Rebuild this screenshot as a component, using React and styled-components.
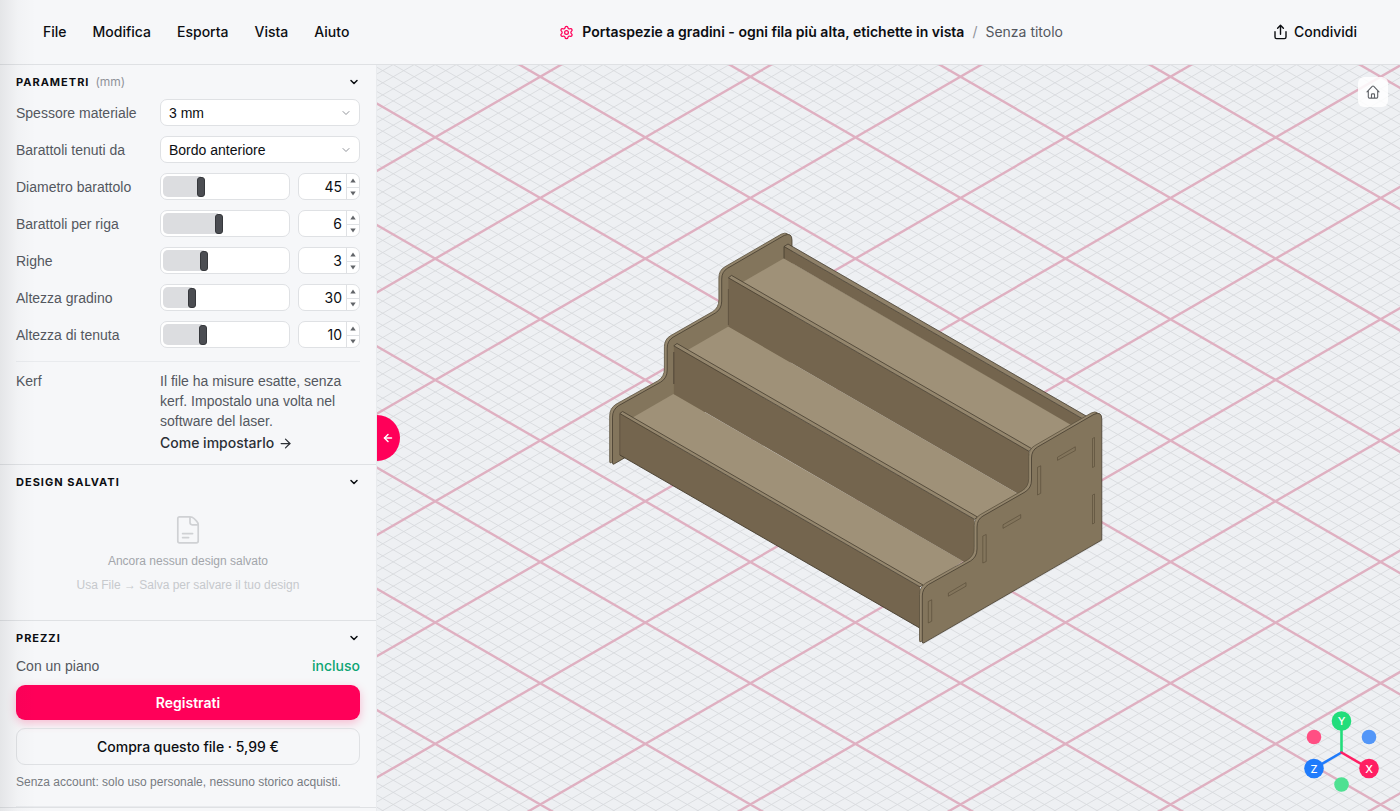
import React, { useState } from 'react';
import styled, { createGlobalStyle } from 'styled-components';
import { ArrowLeft, ArrowRight, ChevronDown, Settings } from 'lucide-react';

const GlobalStyle = createGlobalStyle`
  :root {
    --surface: #f6f7f9;
    --canvas: #eef0f3;
    --line: #dfe1e4;
    --line-soft: #e9ebee;
    --text: #0c0e12;
    --text-secondary: #54585f;
    --text-muted: #909399;
    --accent: #ff0059;
    --success: #0da574;
    --font-plain: 'Liberation Sans', Arial, sans-serif;
  }

  * {
    box-sizing: border-box;
  }

  body {
    margin: 0;
    background: var(--surface);
    color: var(--text);
    font-family: Inter, 'Liberation Sans', sans-serif;
    font-size: 14px;
    line-height: 20px;
  }

  button,
  input,
  select {
    font: inherit;
    color: inherit;
  }
`;

const Page = styled.div`
  display: flex;
  flex-direction: column;
  height: 100vh;
  overflow: hidden;
`;

const EdgeShade = styled.div`
  position: absolute;
  top: 0;
  bottom: 0;
  left: 0;
  width: 36px;
  background: linear-gradient(to right, rgba(20, 24, 32, 0.08), rgba(20, 24, 32, 0.02) 50%, transparent);
  pointer-events: none;
`;

const Header = styled.header`
  display: flex;
  align-items: center;
  justify-content: space-between;
  flex: none;
  height: 65px;
  padding: 0 32px;
  border-bottom: 1px solid var(--line);
`;

const Menu = styled.nav`
  display: flex;
  gap: 4px;
`;

const MenuButton = styled.button`
  display: flex;
  align-items: center;
  gap: 6px;
  padding: 6px 11px;
  border: 0;
  background: none;
  font-weight: 500;
  cursor: pointer;
`;

const DocumentTitle = styled.div`
  display: flex;
  align-items: center;
  gap: 8px;
  white-space: nowrap;

  svg {
    color: var(--accent);
  }
`;

const DesignName = styled.h1`
  margin: 0;
  font-size: 14px;
  font-weight: 600;
`;

const Slash = styled.span`
  color: var(--text-muted);
`;

const FileName = styled.span`
  color: var(--text-secondary);
`;

const Body = styled.div`
  display: flex;
  flex: 1;
  min-height: 0;
`;

const Sidebar = styled.aside`
  flex: none;
  width: 377px;
  border-right: 1px solid var(--line-soft);
  overflow: hidden;
`;

const Section = styled.section`
  padding: 0 16px ${({ $bottom }) => $bottom || 0}px;
  border-bottom: 1px solid var(--line);
`;

const SectionHeader = styled.button`
  display: flex;
  align-items: center;
  width: 100%;
  height: 34px;
  padding: 0;
  border: 0;
  background: none;
  font-size: 12px;
  text-align: left;
  cursor: pointer;

  svg {
    margin-left: auto;
  }
`;

const SectionTitle = styled.span`
  font-size: 11px;
  font-weight: 700;
  letter-spacing: 1px;
  text-transform: uppercase;
`;

const Unit = styled.span`
  margin-left: 6px;
  color: var(--text-muted);
`;

const Rows = styled.div`
  display: flex;
  flex-direction: column;
  gap: 10px;
`;

const Row = styled.div`
  display: grid;
  grid-template-columns: 136px 1fr;
  column-gap: 8px;
  align-items: ${({ $top }) => ($top ? 'start' : 'center')};
`;

const Label = styled.label`
  color: var(--text-secondary);
  font-family: var(--font-plain);
  white-space: nowrap;
`;

const SelectBox = styled.div`
  display: grid;
  align-items: center;

  svg {
    grid-area: 1 / 1;
    justify-self: end;
    margin-right: 8px;
    color: var(--text-muted);
    pointer-events: none;
  }
`;

const Select = styled.select`
  grid-area: 1 / 1;
  width: 100%;
  height: 27px;
  padding: 0 8px;
  border: 1px solid var(--line);
  border-radius: 7px;
  background: #fff;
  font-family: var(--font-plain);
  appearance: none;
`;

const Controls = styled.div`
  display: grid;
  grid-template-columns: 1fr 62px;
  gap: 8px;
`;

const SliderBox = styled.div`
  display: grid;
  align-items: center;
  height: 27px;
  padding: 2px 2px 2px 0;
  border: 1px solid var(--line);
  border-radius: 7px;
  background: #fff;
`;

const SliderFill = styled.span`
  grid-area: 1 / 1;
  height: 21px;
  margin-left: 2px;
  border-radius: 5px 0 0 5px;
  background: #dcdde0;
`;

const Slider = styled.input`
  grid-area: 1 / 1;
  width: 100%;
  height: 21px;
  margin: 0;
  background: none;
  appearance: none;

  &::-webkit-slider-thumb {
    width: 8px;
    height: 20px;
    border: 1px solid #36383c;
    border-radius: 3px;
    background: #4b4d52;
    appearance: none;
  }
`;

const NumberBox = styled.div`
  display: grid;
  grid-template-columns: 1fr 13px;
  height: 27px;
  border: 1px solid var(--line);
  border-radius: 7px;
  background: #fff;
  overflow: hidden;
`;

const NumberInput = styled.input`
  min-width: 0;
  padding: 0 4px 0 0;
  border: 0;
  background: none;
  text-align: right;
  appearance: textfield;

  &::-webkit-inner-spin-button {
    appearance: none;
  }
`;

const Stepper = styled.div`
  display: grid;
  grid-template-rows: 1fr 1fr;
  border-left: 1px solid var(--line);
`;

const StepButton = styled.button`
  display: flex;
  align-items: center;
  justify-content: center;
  padding: 0;
  border: 0;
  background: none;

  & + & {
    border-top: 1px solid var(--line);
  }
`;

const Divider = styled.hr`
  width: 100%;
  margin: ${({ $space }) => $space}px 0 0;
  border: 0;
  border-top: 1px solid var(--line-soft);
`;

const KerfRow = styled(Row)`
  padding-top: 9px;
`;

const KerfText = styled.p`
  margin: 0 0 2px;
  color: var(--text-secondary);
  font-family: var(--font-plain);
`;

const KerfLink = styled.a`
  display: inline-flex;
  align-items: center;
  gap: 4px;
  color: #2c3036;
  font-weight: 500;
  text-decoration: none;
`;

const EmptyState = styled.div`
  display: flex;
  flex-direction: column;
  align-items: center;
  padding: 16px 0 25px;
  color: #a3a6ab;
  font-family: var(--font-plain);
  font-size: 12px;

  svg {
    margin-bottom: 6px;
    color: #cfd1d4;
  }
`;

const EmptyHint = styled.span`
  margin-top: 4px;
  color: #c6c9cd;
`;

const PlanRow = styled.div`
  display: flex;
  justify-content: space-between;
  padding: 1px 0 9px;
  color: var(--text-secondary);
`;

const Plan = styled.span`
  font-family: var(--font-plain);
`;

const Included = styled.span`
  color: var(--success);
  font-weight: 500;
`;

const ActionButton = styled.button`
  display: block;
  width: 100%;
  height: ${({ $primary }) => ($primary ? 35 : 37)}px;
  margin-bottom: 8px;
  border: ${({ $primary }) => ($primary ? '0' : '1px solid var(--line)')};
  border-radius: 9px;
  background: ${({ $primary }) => ($primary ? 'var(--accent)' : 'transparent')};
  box-shadow: ${({ $primary }) => ($primary ? '0 3px 10px rgba(255, 0, 89, 0.25)' : 'none')};
  color: ${({ $primary }) => ($primary ? '#fff' : 'var(--text)')};
  font-weight: ${({ $primary }) => ($primary ? 600 : 500)};
  cursor: pointer;
`;

const Note = styled.p`
  margin: 0;
  color: #777b81;
  font-family: var(--font-plain);
  font-size: 12px;
  line-height: 18px;
  white-space: nowrap;
`;

const Viewport = styled.main`
  position: relative;
  flex: 1;
  min-width: 0;
  background: var(--canvas);
`;

const Scene = styled.svg`
  display: block;
  width: 100%;
  height: 100%;
`;

const CollapseButton = styled.button`
  position: absolute;
  top: 50%;
  left: 0;
  display: flex;
  align-items: center;
  justify-content: center;
  width: 23px;
  height: 46px;
  padding: 0 2px 0 0;
  border: 0;
  border-radius: 0 23px 23px 0;
  background: var(--accent);
  color: #fff;
  transform: translateY(-50%);
`;

const HomeButton = styled.button`
  position: absolute;
  top: 12px;
  right: 12px;
  display: flex;
  align-items: center;
  justify-content: center;
  width: 30px;
  height: 30px;
  padding: 0;
  border: 0;
  border-radius: 6px;
  background: rgba(255, 255, 255, 0.85);
  color: #5f6267;
`;

const Gizmo = styled.svg`
  position: absolute;
  right: 18px;
  bottom: 16px;
`;

const PARAMS = [
  { id: 'diameter', label: 'Diametro barattolo', value: 45, min: 25, max: 90 },
  { id: 'perRow', label: 'Barattoli per riga', value: 6, min: 1, max: 12 },
  { id: 'rows', label: 'Righe', value: 3, min: 1, max: 7 },
  { id: 'step', label: 'Altezza gradino', value: 30, min: 15, max: 80 },
  { id: 'hold', label: 'Altezza di tenuta', value: 10, min: 3, max: 25 },
];

// Isometric floor grid: two families of lines at +-30 degrees
const SLOPE = 0.5774;
const CELL = 12.13;
const ORIGIN = { x: 540.3, y: 76.7 };

const gridPath = (major) => {
  const x0 = -400;
  const x1 = 2200;
  let d = '';
  for (let k = -160; k <= 210; k++) {
    if ((k % 10 === 0) !== major) continue;
    [SLOPE, -SLOPE].forEach((s) => {
      const y = ORIGIN.y + k * CELL;
      d += `M${x0} ${(y + s * (x0 - ORIGIN.x)).toFixed(1)}L${x1} ${(y + s * (x1 - ORIGIN.x)).toFixed(1)}`;
    });
  }
  return d;
};

const MINOR_GRID = gridPath(false);
const MAJOR_GRID = gridPath(true);

const PANEL =
  'M922.3 642V596Q922.3 588.5 928.5 584.5L970.5 561Q977 557 977 549V527Q977 519.5 983 516L1025 492Q1031.5 488 1031.5 480V458Q1031.5 450.5 1037.5 447L1094 414.3Q1101.8 411 1101.8 419V540L924 642.8Q922.3 643.8 922.3 642Z';

const Side = ({ x, y }) => (
  <g transform={`translate(${x} ${y})`} strokeWidth="0.8" strokeLinejoin="round">
    <path d={PANEL} transform="translate(-2.8 -1.3)" fill="#94866d" stroke="#5b503e" />
    <path d={PANEL} fill="#83755c" stroke="#453c2e" />
  </g>
);

const SLOTS = [
  'M1037.5 467.3L1040.7 465.8V493.3L1037.5 495Z',
  'M982.8 536L986.2 534.5V561.5L982.8 563Z',
  'M928.3 601.5L931.7 599.8V621.2L928.3 623Z',
  'M1057.5 457.3L1075.3 446.8V450.5L1057.5 460.3Z',
  'M1003 524.8L1020.7 514.6V518.2L1003 528.3Z',
  'M948.4 593L966 582.6V586.2L948.4 596.2Z',
  'M1092.5 438.5L1094.5 437.5V466.5L1092.5 467.5Z',
  'M1092.5 495L1094.5 494V523L1092.5 524Z',
];

const Rack = () => (
  <g strokeLinejoin="round">
    <Side x={-309.8} y={-178.9} />
    <path d="M784 258.3L1073 425.2L1034 452L742 282.5Z" fill="#9f9178" />
    <path d="M784 246.5L1083 419L1071 425L784 258.5Z" fill="#74654e" />
    <path d="M784 246.5L788 244L1087 416.5L1083 419Z" fill="#8f8169" stroke="#453c2e" strokeWidth="0.8" />
    <path d="M784 246.5V258.5" stroke="#453c2e" strokeWidth="0.8" />

    <path d="M728.4 326.5L1018 493.7L978 520L686 351Z" fill="#9f9178" />
    <path d="M728.4 277.8L1029 451V500L728.4 326.5Z" fill="#74654e" />
    <path d="M728.4 277.8L731.5 275.4L1032 448.8L1029 451.3Z" fill="#94866d" stroke="#453c2e" strokeWidth="0.8" />
    <path d="M728.4 289V325" stroke="#5b4e3b" strokeWidth="0.8" />

    <path d="M673.4 394L963 561.2L924 587L631 418.5Z" fill="#9f9178" />
    <path d="M673.8 345.8L974.5 519.3V568L673.8 394Z" fill="#74654e" />
    <path d="M673.8 345.8L677 343.5L977.5 517L974.5 519.3Z" fill="#94866d" stroke="#453c2e" strokeWidth="0.8" />
    <path d="M673.8 352V384" stroke="#453c2e" strokeWidth="0.8" />

    <path d="M619.8 413.5L920 586.8V628.2L619.8 455Z" fill="#74654e" />
    <path d="M619.8 455L920 628.2" stroke="#453c2e" strokeWidth="0.9" />
    <path d="M619.8 413.5L622.6 411.5L923 585L920 586.8Z" fill="#94866d" stroke="#453c2e" strokeWidth="0.8" />
    <path d="M619.8 414V455" stroke="#5b4e3b" strokeWidth="0.8" />

    <Side x={0} y={0} />
    {SLOTS.map((d) => (
      <path key={d} d={d} fill="#83755c" stroke="#554936" strokeWidth="0.6" />
    ))}
  </g>
);

const ShareIcon = () => (
  <svg width="15" height="16" viewBox="0 0 15 16" fill="none" stroke="currentColor" strokeWidth="1.4" strokeLinecap="round" strokeLinejoin="round">
    <path d="M7.5 10.3V1.5M4.6 4.2L7.5 1.3L10.4 4.2M2 7.8V13Q2 14.6 3.6 14.6H11.4Q13 14.6 13 13V7.8" />
  </svg>
);

const HomeIcon = () => (
  <svg width="14" height="14" viewBox="0 0 14 14" fill="none" stroke="currentColor" strokeWidth="1.1" strokeLinecap="round" strokeLinejoin="round">
    <path d="M1 6.8L6.2 1.4Q7 0.7 7.8 1.4L13 6.8M2.3 5.6V12Q2.3 13.1 3.4 13.1H10.6Q11.7 13.1 11.7 12V5.6M5.5 13V9.6Q5.5 8.9 6.2 8.9H7.8Q8.5 8.9 8.5 9.6V13" />
  </svg>
);

const FileIcon = () => (
  <svg width="24" height="30" viewBox="0 0 24 30" fill="none" stroke="currentColor" strokeWidth="1.7" strokeLinecap="round" strokeLinejoin="round">
    <path d="M14 1.8H3.6Q1.8 1.8 1.8 3.6V26Q1.8 27.8 3.6 27.8H20.4Q22.2 27.8 22.2 26V10Q22.2 7.8 20.6 6.2L18 3.5Q16.3 1.8 14 1.8V7.6Q14 9.8 16.2 9.8H22M6.6 18.6H16.6M6.6 22.6H12.6" />
  </svg>
);

const Triangle = ({ down }) => (
  <svg width="6" height="5" viewBox="0 0 6 5" fill="#626569">
    <path d={down ? 'M0.3 0.5H5.7L3 4.5Z' : 'M0.3 4.5H5.7L3 0.5Z'} />
  </svg>
);

const ParamRow = ({ id, label, value: initial, min, max }) => {
  const [value, setValue] = useState(initial);
  const change = (next) => setValue(Math.min(max, Math.max(min, Number(next))));

  return (
    <Row>
      <Label htmlFor={id}>{label}</Label>
      <Controls>
        <SliderBox>
          <SliderFill style={{ width: `${((value - min) / (max - min)) * 94 + 1}%` }} />
          <Slider type="range" aria-label={label} min={min} max={max} value={value} onChange={(e) => change(e.target.value)} />
        </SliderBox>
        <NumberBox>
          <NumberInput id={id} type="number" min={min} max={max} value={value} onChange={(e) => change(e.target.value)} />
          <Stepper>
            <StepButton type="button" aria-label={`${label} +`} onClick={() => change(value + 1)}>
              <Triangle />
            </StepButton>
            <StepButton type="button" aria-label={`${label} -`} onClick={() => change(value - 1)}>
              <Triangle down />
            </StepButton>
          </Stepper>
        </NumberBox>
      </Controls>
    </Row>
  );
};

const SelectRow = ({ id, label, options }) => (
  <Row>
    <Label htmlFor={id}>{label}</Label>
    <SelectBox>
      <Select id={id}>
        {options.map((option) => (
          <option key={option}>{option}</option>
        ))}
      </Select>
      <ChevronDown size={12} />
    </SelectBox>
  </Row>
);

const Heading = ({ title, unit }) => (
  <SectionHeader type="button">
    <SectionTitle>{title}</SectionTitle>
    {unit && <Unit>{unit}</Unit>}
    <ChevronDown size={12} strokeWidth={3} />
  </SectionHeader>
);

const AxisGizmo = () => (
  <Gizmo width="82" height="84" viewBox="1300 711 82 84" fontFamily="Inter, sans-serif" fontSize="11" fontWeight="500" textAnchor="middle">
    <circle cx="1314" cy="737" r="7.3" fill="#ff4f83" />
    <circle cx="1369" cy="737" r="7.3" fill="#5296f8" />
    <circle cx="1341.5" cy="784.5" r="7.3" fill="#4ee192" />
    <g strokeWidth="2.6" strokeLinecap="round">
      <path d="M1341.5 752.5V722" stroke="#22dd7b" />
      <path d="M1341.5 752.5L1314 768.5" stroke="#1f7bfb" />
      <path d="M1341.5 752.5L1369 768.5" stroke="#ff1f63" />
    </g>
    <circle cx="1341.5" cy="721" r="9.8" fill="#22dd7b" />
    <circle cx="1314" cy="768.5" r="9.8" fill="#1f7bfb" />
    <circle cx="1369" cy="768.5" r="9.8" fill="#ff1f63" />
    <g fill="#fff">
      <text x="1341.5" y="725">Y</text>
      <text x="1314" y="772.5">Z</text>
      <text x="1369" y="772.5">X</text>
    </g>
  </Gizmo>
);

const App = () => (
  <Page>
    <GlobalStyle />
    <Header>
      <Menu>
        {['File', 'Modifica', 'Esporta', 'Vista', 'Aiuto'].map((item) => (
          <MenuButton key={item} type="button">
            {item}
          </MenuButton>
        ))}
      </Menu>
      <DocumentTitle>
        <Settings size={15} />
        <DesignName>Portaspezie a gradini - ogni fila più alta, etichette in vista</DesignName>
        <Slash>/</Slash>
        <FileName>Senza titolo</FileName>
      </DocumentTitle>
      <MenuButton type="button">
        <ShareIcon />
        Condividi
      </MenuButton>
    </Header>

    <Body>
      <Sidebar>
        <Section $bottom={11}>
          <Heading title="Parametri" unit="(mm)" />
          <Rows>
            <SelectRow id="thickness" label="Spessore materiale" options={['3 mm', '4 mm', '6 mm']} />
            <SelectRow id="held" label="Barattoli tenuti da" options={['Bordo anteriore', 'Fori']} />
            {PARAMS.map((param) => (
              <ParamRow key={param.id} {...param} />
            ))}
          </Rows>
          <Divider $space={13} />
          <KerfRow $top>
            <Label as="span">Kerf</Label>
            <div>
              <KerfText>Il file ha misure esatte, senza kerf. Impostalo una volta nel software del laser.</KerfText>
              <KerfLink href="#kerf">
                Come impostarlo <ArrowRight size={15} />
              </KerfLink>
            </div>
          </KerfRow>
        </Section>

        <Section>
          <Heading title="Design salvati" />
          <EmptyState>
            <FileIcon />
            <span>Ancora nessun design salvato</span>
            <EmptyHint>Usa File → Salva per salvare il tuo design</EmptyHint>
          </EmptyState>
        </Section>

        <Section>
          <Heading title="Prezzi" />
          <PlanRow>
            <Plan>Con un piano</Plan>
            <Included>incluso</Included>
          </PlanRow>
          <ActionButton type="button" $primary>
            Registrati
          </ActionButton>
          <ActionButton type="button">Compra questo file · 5,99 €</ActionButton>
          <Note>Senza account: solo uso personale, nessuno storico acquisti.</Note>
          <Divider $space={15} />
        </Section>
      </Sidebar>

      <Viewport>
        <Scene viewBox="377 65 1023 746" preserveAspectRatio="xMidYMid slice" role="img" aria-label="Portaspezie">
          <path d={MINOR_GRID} stroke="#d8dade" strokeWidth="0.9" fill="none" />
          <path d={MAJOR_GRID} stroke="#dfb0c1" strokeWidth="2.4" fill="none" />
          <Rack />
        </Scene>
        <CollapseButton type="button" aria-label="Chiudi pannello">
          <ArrowLeft size={12} strokeWidth={3} />
        </CollapseButton>
        <HomeButton type="button" aria-label="Vista iniziale">
          <HomeIcon />
        </HomeButton>
        <AxisGizmo />
      </Viewport>
    </Body>
    <EdgeShade />
  </Page>
);

export default App;
